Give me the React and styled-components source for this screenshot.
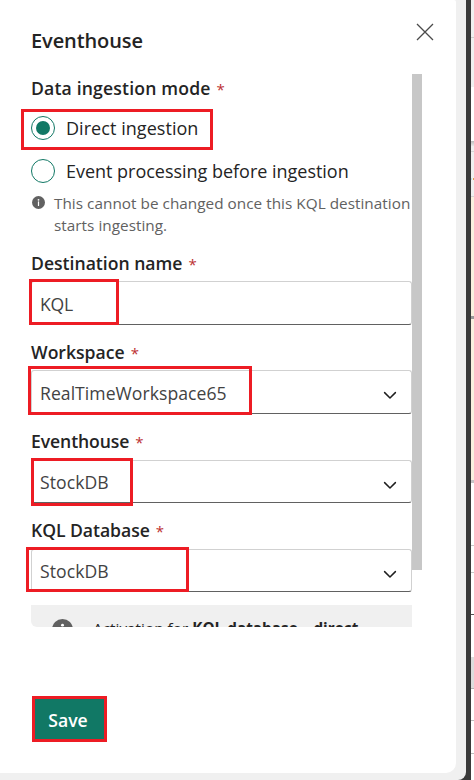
import React from 'react';
import styled, { createGlobalStyle } from 'styled-components';

const Global = createGlobalStyle`
  *, *::before, *::after { box-sizing: border-box; }
  body { margin: 0; background: #3a3a3a; overflow: hidden; }
  body, button, input { font-family: "Open Sans", "Noto Sans", sans-serif; }
`;

const Page = styled.div`
  display: flex;
  width: 474px;
  height: 780px;
  overflow: hidden;
  background: #3a3a3a;
`;

const Frame = styled.div`
  width: 466px;
  height: 780px;
  padding: 0 10px 7px 0;
  background: #f0f0f0;
  border-bottom-right-radius: 8px;
`;

const Panel = styled.section`
  display: flex;
  flex-direction: column;
  height: 773px;
  background: #fff;
  border-radius: 0 2px 10px 0;
`;

const Header = styled.header`
  display: flex;
  justify-content: space-between;
  height: 74px;
  padding: 23px 22px 0 31px;
`;

const Title = styled.h2`
  margin: 4px 0 0;
  color: #242424;
  font-size: 20px;
  font-weight: 600;
  line-height: 28px;
  letter-spacing: ${(p) => p.$track || 0}px;
`;

const CloseButton = styled.button`
  display: block;
  width: 18px;
  height: 18px;
  padding: 0;
  border: 0;
  background: none;
`;

const Body = styled.div`
  display: flex;
  height: 553px;
  padding-left: 21px;
`;

const Form = styled.div`
  width: 391px;
  height: 553px;
  padding-left: 10px;
  overflow: hidden;
`;

const ScrollThumb = styled.div`
  width: 10px;
  height: 496px;
  background: #c7c7c7;
`;

const Label = styled.div`
  height: 28px;
  line-height: 28px;
  color: #242424;
  font-size: 17.6px;
  font-weight: 600;
  white-space: nowrap;
  letter-spacing: ${(p) => p.$track || 0}px;
`;

const Star = styled.span`
  margin-left: 6px;
  color: #bc2f32;
  font-size: 15px;
  font-weight: 400;
  letter-spacing: 0;
`;

const Marked = styled.div`
  position: relative;
`;

const Outline = styled.div`
  position: absolute;
  left: ${(p) => p.$x}px;
  top: ${(p) => p.$y}px;
  width: ${(p) => p.$w}px;
  height: ${(p) => p.$h}px;
  border: 3px solid #ed1c24;
  pointer-events: none;
`;

const Option = styled.div`
  display: flex;
  align-items: center;
  gap: 11px;
  height: ${(p) => p.$h}px;
  color: #242424;
  font-size: 18px;
  white-space: nowrap;
  letter-spacing: ${(p) => p.$track || 0}px;
`;

const Radio = styled.span`
  display: grid;
  place-items: center;
  flex: none;
  width: 24px;
  height: 24px;
  border: 1.3px solid #117865;
  border-radius: 50%;
  &::after {
    content: "";
    width: 14px;
    height: 14px;
    border-radius: 50%;
    background: ${(p) => (p.$on ? '#117865' : 'transparent')};
  }
`;

const Hint = styled.div`
  display: flex;
  gap: 9px;
  height: 61px;
  padding: 4px 0 0 1px;
  color: #616161;
  font-size: 15.3px;
  line-height: 22px;
  white-space: nowrap;
`;

const HintIcon = styled.svg`
  flex: none;
  width: 13px;
  height: 13px;
  margin-top: 4px;
`;

const Line = styled.div`
  letter-spacing: ${(p) => p.$track || 0}px;
`;

const Control = styled.div`
  display: flex;
  align-items: center;
  justify-content: space-between;
  height: ${(p) => p.$h}px;
  padding: 1px 13px 0 8px;
  border: 1px solid #d1d1d1;
  border-bottom-color: #616161;
  border-radius: 3px;
  color: #424242;
  font-size: 17.6px;
  letter-spacing: ${(p) => p.$track || 0}px;
`;

const Gap = styled.div`
  height: ${(p) => p.$h}px;
`;

const Notice = styled.div`
  display: flex;
  gap: 20px;
  height: 22px;
  padding: 10px 0 0 21px;
  overflow: hidden;
  background: #f0f0f0;
  border-bottom-left-radius: 6px;
  color: #242424;
  font-size: 15.3px;
  line-height: 26px;
  white-space: nowrap;
`;

const NoticeIcon = styled.svg`
  flex: none;
  width: 21px;
  height: 21px;
  margin-top: 4px;
`;

const Footer = styled.footer`
  padding: 69px 0 0 32px;
`;

const SaveButton = styled.button`
  display: block;
  width: 75px;
  height: 46px;
  padding: 1px 3px 0 0;
  border: 3px solid #ed1c24;
  background: #117865;
  color: #fff;
  font-size: 17.6px;
  font-weight: 600;
  line-height: 36px;
  letter-spacing: 0;
`;

const Backdrop = styled.aside`
  display: flex;
  flex-direction: column;
  width: 3px;
  margin-left: 5px;
`;

const Segment = styled.div`
  flex: none;
  height: ${(p) => p.$h}px;
  background: ${(p) => p.$c};
`;

const segments = [
  [37, '#f0f0f0'], [1, '#d0d0d0'], [49, '#f0f0f0'], [54, '#ffffff'],
  [5, 'linear-gradient(#bdbdbd, #eaeaea)'], [5, '#f0f0f0'], [1, '#d6d6d6'],
  [26, '#f0f0f0'], [2, 'linear-gradient(90deg, #bfe0ea 34%, #f0f0f0 34% 66%, #e0a050 66%)'],
  [16, '#f0f0f0'], [1, '#d6d6d6'], [119, '#faf0df'], [3, '#999999'],
  [161, '#faf0df'], [3, '#c6c4c6'], [62, '#ffffff'], [1, '#c8c8c8'],
  [26, '#ffffff'], [1, '#c8c8c8'], [41, '#ffffff'], [1, '#505050'],
  [42, '#ffffff'], [31, '#dddddd'], [1, '#b5b5b5'], [31, '#ffffff'],
  [1, '#bdbdbd'], [32, '#ffffff'], [1, '#bdbdbd'], [26, '#ffffff'],
];

const ChevronIcon = styled.svg`
  width: 16px;
  height: 16px;
  margin-top: 5px;
  fill: none;
  stroke: #1f1f1f;
  stroke-width: 1.5;
  stroke-linecap: round;
  stroke-linejoin: round;
`;

const Chevron = () => (
  <ChevronIcon viewBox="0 0 16 16">
    <path d="M2.6 5.6 8 11l5.4-5.4" />
  </ChevronIcon>
);

const InfoMark = () => (
  <>
    <circle cx="8" cy="8" r="8" fill="#616161" />
    <circle cx="8" cy="4.7" r="1.1" fill="#fff" />
    <path d="M8 7.2v4.5" stroke="#fff" strokeWidth="1.5" strokeLinecap="round" />
  </>
);

const fields = [
  { label: 'Destination name', lt: 0, value: 'KQL', vt: -0.2, h: 44, lead: 4, gap: 13, box: [-2, -2, 90, 46] },
  { label: 'Workspace', lt: 0, value: 'RealTimeWorkspace65', vt: 0.04, h: 44, lead: 4, gap: 13, select: true, box: [-3, -4, 224, 49] },
  { label: 'Eventhouse', lt: -0.1, value: 'StockDB', vt: 0.05, h: 43, lead: 5, gap: 13, select: true, box: [0, -2, 102, 48] },
  { label: 'KQL Database', lt: -0.05, value: 'StockDB', vt: 0.05, h: 43, lead: 5, gap: 13, select: true, box: [-5, -2, 163, 45] },
];

export default function App() {
  return (
    <Page>
      <Global />
      <Frame>
        <Panel>
          <Header>
            <Title $track={-0.1}>Eventhouse</Title>
            <CloseButton aria-label="Close">
              <svg width="18" height="18" viewBox="0 0 18 18" fill="none" stroke="#4a4a4a" strokeWidth="1.3">
                <path d="M1 1l16 16M17 1 1 17" />
              </svg>
            </CloseButton>
          </Header>
          <Body>
            <Form>
              <Label $track={0.17}>Data ingestion mode<Star>*</Star></Label>
              <Marked>
                <Gap $h={5} />
                <Option $h={42} $track={0.05}><Radio $on />Direct ingestion</Option>
                <Outline $x={-10} $y={7} $w={192} $h={41} />
              </Marked>
              <Gap $h={5} />
              <Option $h={34} $track={-0.02}><Radio />Event processing before ingestion</Option>
              <Hint>
                <HintIcon viewBox="0 0 16 16"><InfoMark /></HintIcon>
                <div>
                  <Line $track={0.03}>This cannot be changed once this KQL destination</Line>
                  <Line $track={0.03}>starts ingesting.</Line>
                </div>
              </Hint>
              {fields.map((f) => (
                <React.Fragment key={f.label}>
                  <Label $track={f.lt}>{f.label}<Star>*</Star></Label>
                  <Gap $h={f.lead} />
                  <Marked>
                    <Control $h={f.h} $track={f.vt}>
                      {f.value}
                      {f.select && <Chevron />}
                    </Control>
                    <Outline $x={f.box[0]} $y={f.box[1]} $w={f.box[2]} $h={f.box[3]} />
                  </Marked>
                  <Gap $h={f.gap} />
                </React.Fragment>
              ))}
              <Notice>
                <NoticeIcon viewBox="0 0 16 16"><InfoMark /></NoticeIcon>
                <Line $track={0.02}>Activation for <b>KQL database – direct</b></Line>
              </Notice>
            </Form>
            <ScrollThumb />
          </Body>
          <Footer>
            <SaveButton>Save</SaveButton>
          </Footer>
        </Panel>
      </Frame>
      <Backdrop>
        {segments.map(([h, c], i) => <Segment key={i} $h={h} $c={c} />)}
      </Backdrop>
    </Page>
  );
}
